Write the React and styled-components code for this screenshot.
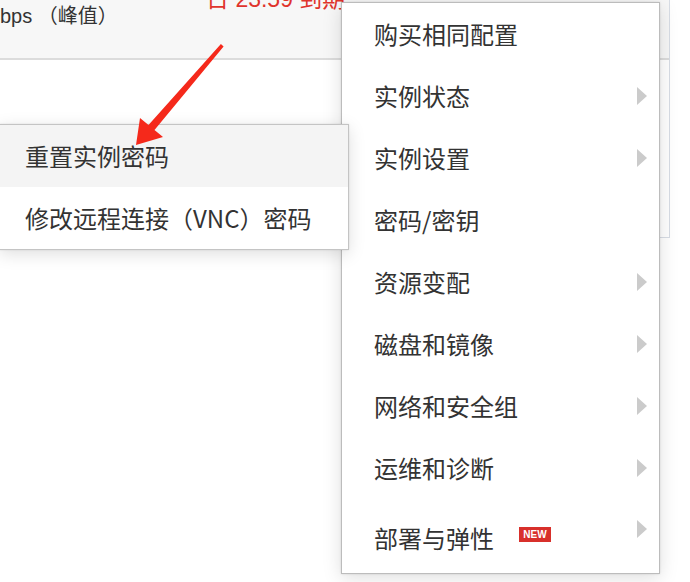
import React from 'react';
import styled, { createGlobalStyle } from 'styled-components';

const Global = createGlobalStyle`
  *, *::before, *::after { box-sizing: border-box; }
  html, body { margin: 0; padding: 0; background: #fff; }
  body { font-family: "Liberation Sans", "Noto Sans CJK SC", sans-serif; color: #333; }
`;

const Stage = styled.div`
  position: relative;
  width: 690px;
  height: 582px;
  overflow: hidden;
  background: #fff;
`;

const Card = styled.div`
  width: 670px;
  height: 238px;
  border-right: 1px solid #d8dde5;
  border-bottom: 1px solid #d8dde5;
  display: flex;
  flex-direction: column;
`;

const CardHeader = styled.div`
  height: 60px;
  background: #f7f7f7;
  border-bottom: 2px solid #dcdcdc;
  display: grid;
  grid-template-columns: 206px auto;
  align-items: start;
  padding-top: 4px;
`;

const HeaderText = styled.span`
  font-size: ${p => p.$size}px;
  line-height: 24px;
  color: ${p => p.$color || '#333'};
  white-space: nowrap;
  margin-top: ${p => p.$lift || 0}px;
`;

const Menu = styled.div`
  position: absolute;
  left: 341px;
  top: 2px;
  width: 319px;
  height: 572px;
  background: #fff;
  border: 1px solid #bcbcbc;
  box-shadow: 0 0 2px rgba(0, 0, 0, 0.12), 0 4px 18px rgba(0, 0, 0, 0.13);
  padding-top: 0;
  display: flex;
  flex-direction: column;
`;

const SubMenu = styled.div`
  position: absolute;
  left: -1px;
  top: 124px;
  width: 350px;
  background: #fff;
  border: 1px solid #c4c4c4;
  box-shadow: 0 0 2px rgba(0, 0, 0, 0.1), 0 4px 16px rgba(0, 0, 0, 0.13);
  display: flex;
  flex-direction: column;
`;

const Item = styled.div`
  height: 62px;
  flex: none;
  display: flex;
  align-items: center;
  justify-content: space-between;
  padding: 0 12px 0 ${p => p.$pad}px;
  background: ${p => (p.$active ? '#f4f4f4' : 'transparent')};
  font-family: "Noto Sans CJK SC", "Liberation Sans", sans-serif;
  font-size: 24px;
  line-height: 24px;
  color: #333;
  white-space: nowrap;
`;

const Label = styled.span`
  display: flex;
  align-items: center;
  margin-top: ${p => (p.$shift || 0) * 2}px;
`;

const Caret = styled.span`
  width: 0;
  height: 0;
  margin-top: ${p => (p.$shift || 0) * 2}px;
  border-left: 10px solid #cbcbcb;
  border-top: 9px solid transparent;
  border-bottom: 9px solid transparent;
`;

const Badge = styled.span`
  margin-left: 25px;
  margin-bottom: 7px;
  width: 32px;
  height: 15px;
  background: #d8302b;
  color: #fff;
  font-family: "Liberation Sans", Arial, sans-serif;
  font-size: 10px;
  font-weight: bold;
  line-height: 15px;
  text-align: center;
`;

const Pointer = styled.svg`
  position: absolute;
  left: 0;
  top: 0;
  pointer-events: none;
`;

const items = [
  { label: '购买相同配置' },
  { label: '实例状态', sub: true },
  { label: '实例设置', sub: true },
  { label: '密码/密钥' },
  { label: '资源变配', sub: true },
  { label: '磁盘和镜像', sub: true },
  { label: '网络和安全组', sub: true },
  { label: '运维和诊断', sub: true },
  { label: '部署与弹性', sub: true, badge: 'NEW', shift: 8 },
];

const subItems = [
  { label: '重置实例密码', active: true },
  { label: '修改远程连接（VNC）密码' },
];

export default function App() {
  return (
    <>
      <Global />
      <Stage>
        <Card>
          <CardHeader>
            <HeaderText $size={20}>bps （峰值）</HeaderText>
            <HeaderText $size={23} $color="#e0342c" $lift={-17}>日 23:59 到期</HeaderText>
          </CardHeader>
        </Card>

        <Menu>
          {items.map(it => (
            <Item key={it.label} $pad={32}>
              <Label $shift={it.shift}>
                {it.label}
                {it.badge && <Badge>{it.badge}</Badge>}
              </Label>
              {it.sub && <Caret $shift={it.shift ? -1 : 0} />}
            </Item>
          ))}
        </Menu>

        <SubMenu>
          {subItems.map(it => (
            <Item key={it.label} $pad={25} $active={it.active}>
              <Label>{it.label}</Label>
            </Item>
          ))}
        </SubMenu>

        <Pointer width="690" height="582" viewBox="0 0 690 582">
          <polygon
            points="220.9,44 223.6,46.6 154.5,130.1 163,137 136,145 140,118 148.5,124.9"
            fill="#f5291b"
          />
        </Pointer>
      </Stage>
    </>
  );
}
